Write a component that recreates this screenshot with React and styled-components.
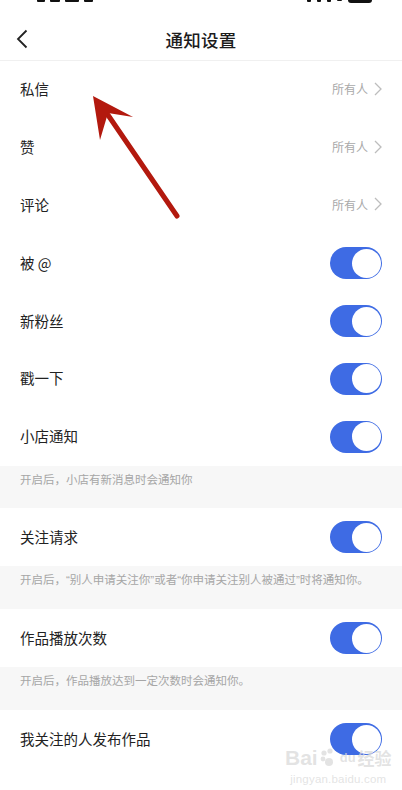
import React from 'react';
import styled, { createGlobalStyle } from 'styled-components';

const GlobalStyle = createGlobalStyle`
	html, body {
		margin: 0;
		padding: 0;
		background: #fff;
	}
	body {
		font-family: "Noto Sans CJK SC", "Noto Sans", sans-serif;
		color: #222;
	}
`;

const BLUE = '#3e6be4';

const Page = styled.div`
	position: relative;
	width: 402px;
	min-height: 790px;
	background: #fff;
	overflow: hidden;
`;

const StatusStrip = styled.div`
	height: 4px;
	display: flex;
	align-items: flex-start;
	justify-content: space-between;
	padding: 0 30px 0 37px;
	overflow: hidden;
`;

const StatusBits = styled.div`
	display: flex;
	align-items: flex-start;
	gap: ${props => props.gap || 4}px;
`;

const Bit = styled.div`
	width: ${props => props.w}px;
	height: ${props => props.h || 2}px;
	background: #111;
	border-radius: 0 0 ${props => props.r || 1}px ${props => props.r || 1}px;
`;

const NavBar = styled.header`
	height: 57px;
	display: flex;
	align-items: center;
	border-bottom: 1px solid #f0f0f0;
	padding: 14px 16px 0;
	box-sizing: border-box;
`;

const BackButton = styled.div`
	width: 14px;
	height: 20px;
	display: flex;
	align-items: center;
`;

const Title = styled.h1`
	flex: 1;
	margin: 0 0 0 -14px;
	text-align: center;
	font-size: 17.5px;
	font-weight: 500;
	color: #1c1c1c;
	letter-spacing: 0.2px;
`;

const Row = styled.div`
	height: ${props => props.h || 57.8}px;
	display: flex;
	align-items: center;
	justify-content: space-between;
	padding: 0 20px;
	box-sizing: border-box;
`;

const Label = styled.span`
	font-size: 14.5px;
	color: #222;
	margin-top: -2px;
`;

const ValueLink = styled.div`
	display: flex;
	align-items: center;
	gap: 6px;
	font-size: 12px;
	color: #a9a9a9;
	margin-top: -2px;
`;

const Toggle = styled.div`
	width: 52px;
	height: 32px;
	border-radius: 16px;
	background: ${props => (props.on ? BLUE : '#ddd')};
	display: flex;
	align-items: center;
	justify-content: ${props => (props.on ? 'flex-end' : 'flex-start')};
	padding: 0 1.5px;
	box-sizing: border-box;
`;

const Knob = styled.div`
	width: 29px;
	height: 29px;
	border-radius: 50%;
	background: #fff;
`;

const Note = styled.div`
	height: ${props => props.h || 43}px;
	background: #f7f7f7;
	padding: 6px 20px 0;
	box-sizing: border-box;
	font-family: "Liberation Sans", "Noto Sans CJK SC", sans-serif;
	font-size: 11.5px;
	line-height: 16px;
	color: #a6a6a6;
	white-space: nowrap;
`;

const ArrowLayer = styled.svg`
	position: absolute;
	left: 0;
	top: 0;
	pointer-events: none;
`;

const Watermark = styled.div`
	position: absolute;
	left: 285px;
	top: 747px;
	display: flex;
	flex-direction: column;
	align-items: center;
	color: rgba(215, 215, 215, 0.7);
	pointer-events: none;
	font-family: "Liberation Sans", Arial, sans-serif;
`;

const MarkTop = styled.div`
	display: flex;
	align-items: center;
	gap: 2px;
	font-size: 21px;
	font-weight: 700;
	line-height: 22px;
`;

const MarkSmall = styled.span`
	font-size: ${props => props.size || 13}px;
	font-family: ${props => (props.cjk ? '"Noto Sans CJK SC", sans-serif' : 'inherit')};
	font-weight: 700;
`;

const MarkUrl = styled.div`
	font-size: 11.5px;
	line-height: 14px;
	margin-top: 3px;
	letter-spacing: 0.2px;
`;

const Chevron = () => (
	<svg width='8' height='14' viewBox='0 0 8 14'>
		<polyline points='1,1 7,7 1,13' fill='none' stroke='#bdbdbd' strokeWidth='1.3' />
	</svg>
);

const Switch = ({ on }) => (
	<Toggle on={on}>
		<Knob />
	</Toggle>
);

const audience = [
	{ label: '私信', value: '所有人' },
	{ label: '赞', value: '所有人' },
	{ label: '评论', value: '所有人' }
];

const toggles = ['被 @', '新粉丝', '戳一下', '小店通知'];

const sections = [
	{ label: '关注请求', note: '开启后，“别人申请关注你”或者“你申请关注别人被通过”时将通知你。' },
	{ label: '作品播放次数', note: '开启后，作品播放达到一定次数时会通知你。' }
];

const App = () => (
	<>
		<GlobalStyle />
		<Page>
			<StatusStrip>
				<StatusBits gap={5}>
					<Bit w={8} />
					<Bit w={10} />
					<Bit w={14} />
					<Bit w={9} />
				</StatusBits>
				<StatusBits gap={6}>
					<Bit w={4} />
					<Bit w={4} />
					<Bit w={4} />
					<Bit w={5} h={1} />
					<Bit w={24} h={3} r={3} />
				</StatusBits>
			</StatusStrip>

			<NavBar>
				<BackButton>
					<svg width='12' height='20' viewBox='0 0 12 20'>
						<polyline points='10.5,1.5 2,10 10.5,18.5' fill='none' stroke='#222' strokeWidth='1.8' />
					</svg>
				</BackButton>
				<Title>通知设置</Title>
			</NavBar>

			{audience.map(item => (
				<Row key={item.label}>
					<Label>{item.label}</Label>
					<ValueLink>
						{item.value}
						<Chevron />
					</ValueLink>
				</Row>
			))}

			{toggles.map(label => (
				<Row key={label}>
					<Label>{label}</Label>
					<Switch on />
				</Row>
			))}
			<Note h={42.5}>开启后，小店有新消息时会通知你</Note>

			{sections.map(s => (
				<React.Fragment key={s.label}>
					<Row h={58}>
						<Label>{s.label}</Label>
						<Switch on />
					</Row>
					<Note>{s.note}</Note>
				</React.Fragment>
			))}

			<Row h={58}>
				<Label>我关注的人发布作品</Label>
				<Switch on />
			</Row>

			<ArrowLayer width='402' height='260' viewBox='0 0 402 260'>
				<line x1='108' y1='115' x2='177' y2='216' stroke='#b3190e' strokeWidth='5' strokeLinecap='round' />
				<polygon points='93,96 133,117 108,113 100,140' fill='#b3190e' />
			</ArrowLayer>

			<Watermark>
				<MarkTop>
					Bai
					<svg width='18' height='20' viewBox='0 0 18 20'>
						<circle cx='4' cy='5' r='2.6' fill='currentColor' />
						<circle cx='10' cy='3' r='2.6' fill='currentColor' />
						<circle cx='3' cy='11' r='2.4' fill='currentColor' />
						<circle cx='9' cy='14' r='4' fill='currentColor' />
					</svg>
					<MarkSmall>du</MarkSmall>
					<MarkSmall size={17} cjk>经验</MarkSmall>
				</MarkTop>
				<MarkUrl>jingyan.baidu.com</MarkUrl>
			</Watermark>
		</Page>
	</>
);

export default App;
